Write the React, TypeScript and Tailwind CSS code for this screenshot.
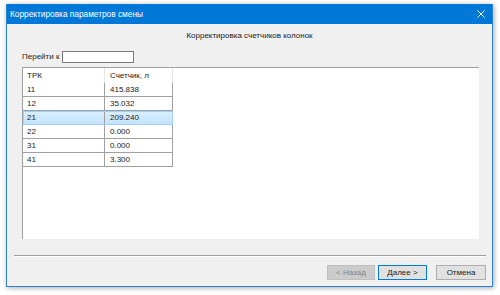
import React from "react";

const rows = [
  { trk: "11", value: "415.838" },
  { trk: "12", value: "35.032" },
  { trk: "21", value: "209.240", selected: true },
  { trk: "22", value: "0.000" },
  { trk: "31", value: "0.000" },
  { trk: "41", value: "3.300" },
];

const App: React.FC = () => {
  return (
    <div className="w-[500px] h-[295px] bg-white pt-[4px] pl-[6px] font-['Liberation_Sans',Arial,sans-serif] text-[#1a1a1a]">
      <div className="w-[487px] h-[283px] flex flex-col bg-[#f0f0f0] border-x border-b border-[#2b86d6] shadow-[1px_1px_5px_rgba(0,0,0,0.35)]">
        {/* title bar */}
        <div className="h-[20px] shrink-0 bg-[#0078d7] flex items-center justify-between pl-[3px] pr-[7px]">
          <span className="text-white text-[8.3px] leading-none">Корректировка параметров смены</span>
          <svg width="8" height="8" viewBox="0 0 8 8" className="block">
            <path d="M0.5 0.5 L7.5 7.5 M7.5 0.5 L0.5 7.5" stroke="#ffffff" strokeWidth="1" />
          </svg>
        </div>

        {/* heading */}
        <div className="mt-[6px] h-[12px] flex items-center justify-center text-[8px] leading-none">
          Корректировка счетчиков колонок
        </div>

        {/* goto */}
        <div className="mt-[9px] h-[12px] flex items-center pl-[15px] text-[8px] leading-none">
          <span className="w-[40px]">Перейти к</span>
          <div className="w-[72px] h-[12px] bg-white border border-[#7a7a7a]" />
        </div>

        {/* grid panel */}
        <div className="mt-[4px] ml-[15px] mr-[13px] h-[172px] bg-white border-t border-l border-[#a0a0a0]">
          <div className="w-[150px] text-[8px] leading-none">
            <div className="flex h-[15px]">
              <div className="w-[82px] flex items-center pl-[4px] border-r border-[#e5e5e5]">ТРК</div>
              <div className="w-[68px] flex items-center pl-[5px] border-r border-[#e5e5e5]">Счетчик, л</div>
            </div>
            {rows.map((r) => (
              <div
                key={r.trk}
                className={
                  r.selected
                    ? "flex h-[14px] border-b border-[#a0a0a0] bg-gradient-to-b from-[#d9efff] to-[#c4e3fd] outline outline-1 -outline-offset-1 outline-[#9fd0f7]"
                    : "flex h-[14px] border-b border-[#a0a0a0]"
                }
              >
                <div className="w-[82px] flex items-center pl-[4px] border-r border-[#a0a0a0]">{r.trk}</div>
                <div className="w-[68px] flex items-center pl-[5px] border-r border-[#a0a0a0]">{r.value}</div>
              </div>
            ))}
          </div>
        </div>

        {/* separator */}
        <div className="mt-[16px] ml-[7px] mr-[6px] h-[2px] border-t border-[#a0a0a0] border-b border-b-white" />

        {/* buttons */}
        <div className="mt-[8px] flex justify-end pr-[6px] text-[8px] leading-none">
          <div className="w-[48px] h-[15px] flex items-center justify-center bg-[#cccccc] border border-[#bfbfbf] text-[#838383]">
            &lt; Назад
          </div>
          <div className="ml-[3px] w-[49px] h-[15px] flex items-center justify-center bg-[#e1e1e1] border border-[#0078d7]">
            Далее &gt;
          </div>
          <div className="ml-[9px] w-[50px] h-[15px] flex items-center justify-center bg-[#e1e1e1] border border-[#adadad]">
            Отмена
          </div>
        </div>
      </div>
    </div>
  );
};

export default App;
